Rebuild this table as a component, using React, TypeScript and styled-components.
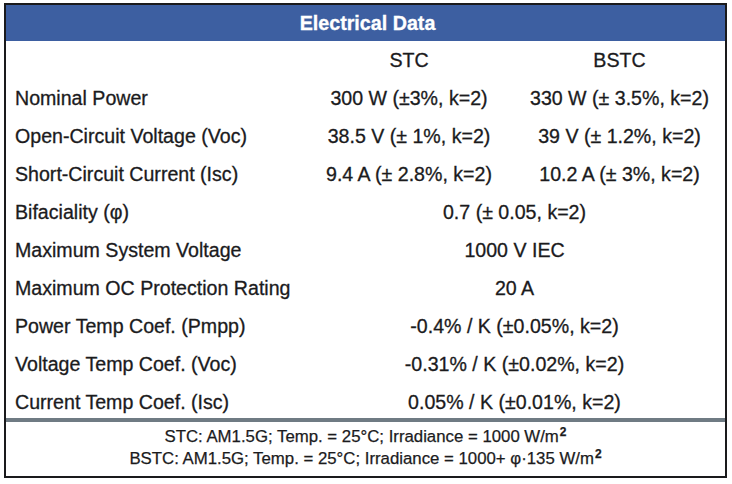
import React from 'react'
import styled, { createGlobalStyle } from 'styled-components'

const GlobalStyle = createGlobalStyle`
    html, body {
        margin: 0;
        padding: 0;
        background: #fff;
    }
    body {
        font-family: 'Liberation Sans', Arial, sans-serif;
        color: #1b1b1d;
    }
`

type Row = {
    label: string
    stc?: string
    bstc?: string
    both?: string
}

const rows: Row[] = [
    { label: 'Nominal Power', stc: '300 W (±3%, k=2)', bstc: '330 W (± 3.5%, k=2)' },
    { label: 'Open-Circuit Voltage (Voc)', stc: '38.5 V (± 1%, k=2)', bstc: '39 V (± 1.2%, k=2)' },
    { label: 'Short-Circuit Current (Isc)', stc: '9.4 A (± 2.8%, k=2)', bstc: '10.2 A (± 3%, k=2)' },
    { label: 'Bifaciality (φ)', both: '0.7 (± 0.05, k=2)' },
    { label: 'Maximum System Voltage', both: '1000 V IEC' },
    { label: 'Maximum OC Protection Rating', both: '20 A' },
    { label: 'Power Temp Coef. (Pmpp)', both: '-0.4% / K (±0.05%, k=2)' },
    { label: 'Voltage Temp Coef. (Voc)', both: '-0.31% / K (±0.02%, k=2)' },
    { label: 'Current Temp Coef. (Isc)', both: '0.05% / K (±0.01%, k=2)' },
]

const Sheet = styled.div`
    margin: 3px 0 0 4px;
    width: 723px;
    box-sizing: border-box;
    border: 2px solid #1a1a1c;
    display: flex;
    flex-direction: column;
`

const Header = styled.div`
    height: 36px;
    background: #3d5fa1;
    color: #fff;
    font-weight: 700;
    font-size: 19.7px;
    -webkit-text-stroke: 0.3px #fff;
    display: flex;
    align-items: center;
    justify-content: center;
    padding-left: 4px;
`

const Body = styled.div`
    display: grid;
    grid-template-columns: 298px 210px 1fr;
    grid-auto-rows: 38px;
    font-size: 19.6px;
    -webkit-text-stroke: 0.3px #1b1b1d;
    align-items: center;
`

const Label = styled.div`
    padding-left: 9px;
    white-space: nowrap;
`

const Value = styled.div<{ $span?: number }>`
    text-align: center;
    white-space: nowrap;
    grid-column: span ${p => p.$span || 1};
`

const Divider = styled.div`
    height: 4px;
    margin-top: -3px;
    background: #6f7b83;
`

const Footer = styled.div`
    padding: 4px 0 6px;
    font-size: 16.8px;
    line-height: 22px;
    text-align: center;
    -webkit-text-stroke: 0.25px #1b1b1d;
    sup {
        font-size: 12px;
        font-weight: 700;
        line-height: 0;
        vertical-align: 6px;
        margin-left: 1px;
    }
`

export default function App() {
    return (
        <>
            <GlobalStyle />
            <Sheet>
                <Header>Electrical Data</Header>
                <Body>
                    <Label />
                    <Value>STC</Value>
                    <Value>BSTC</Value>
                    {rows.map(r => (
                        <React.Fragment key={r.label}>
                            <Label>{r.label}</Label>
                            {r.both ? (
                                <Value $span={2}>{r.both}</Value>
                            ) : (
                                <>
                                    <Value>{r.stc}</Value>
                                    <Value>{r.bstc}</Value>
                                </>
                            )}
                        </React.Fragment>
                    ))}
                </Body>
                <Divider />
                <Footer>
                    <div>STC: AM1.5G; Temp. = 25°C; Irradiance = 1000 W/m<sup>2</sup></div>
                    <div>BSTC: AM1.5G; Temp. = 25°C; Irradiance = 1000+ φ·135 W/m<sup>2</sup></div>
                </Footer>
            </Sheet>
        </>
    )
}
